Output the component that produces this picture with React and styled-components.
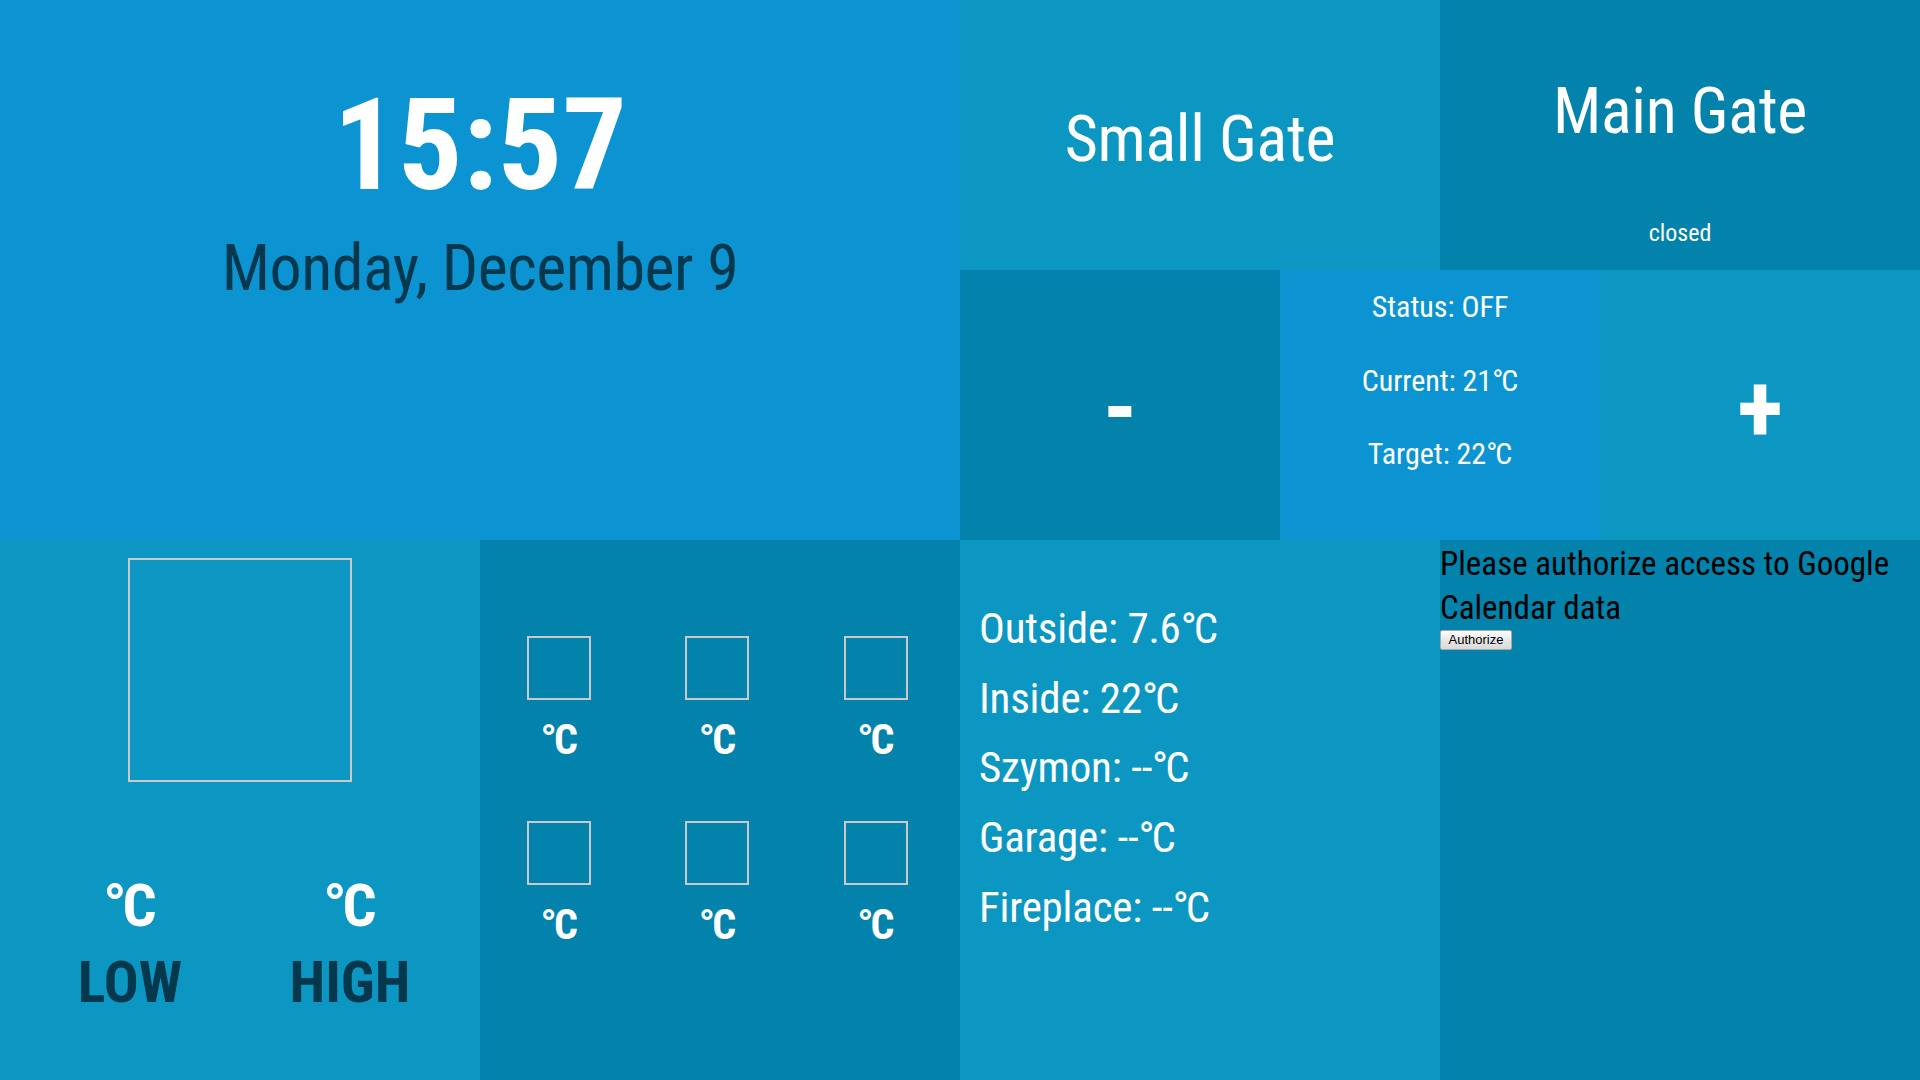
import React from "react";
import styled, { createGlobalStyle } from "styled-components";

const FONT = `"Roboto Condensed", Roboto, "Liberation Sans Narrow", sans-serif`;

const GlobalStyle = createGlobalStyle`
  html, body {
    margin: 0;
    padding: 0;
    width: 1920px;
    height: 1080px;
    overflow: hidden;
    background: #0382ab;
  }
  body {
    font-family: ${FONT};
    font-stretch: condensed;
  }
  * { box-sizing: border-box; }
`;

const C = {
  bright: "#0c94d2",
  mid: "#0c97c3",
  dark: "#0382ab",
  ink: "#05384d",
};

const Page = styled.div`
  display: grid;
  grid-template-columns: 960px 960px;
  grid-template-rows: 540px 540px;
  width: 1920px;
  height: 1080px;
`;

const Panel = styled.section`
  background: ${(p) => C[p.$tone]};
  color: #fff;
  overflow: hidden;
`;

const Deg = styled.span`
  letter-spacing: -0.07em;
`;

const withDeg = (text) => {
  const i = text.indexOf("°");
  if (i < 0) return text;
  return (
    <>
      {text.slice(0, i)}
      <Deg>°</Deg>
      {text.slice(i + 1)}
    </>
  );
};

/* ---- Clock ---- */
const ClockPanel = styled(Panel)`
  display: flex;
  flex-direction: column;
  align-items: center;
  padding-top: 70px;
`;

const Time = styled.div`
  font-size: 128px;
  font-weight: 700;
  line-height: 150px;
`;

const DateLine = styled.div`
  margin-top: 11px;
  font-size: 64px;
  line-height: 75px;
  letter-spacing: -0.5px;
  color: ${C.ink};
`;

/* ---- Right top ---- */
const RightTop = styled.div`
  display: grid;
  grid-template-rows: 270px 270px;
`;

const GateRow = styled.div`
  display: grid;
  grid-template-columns: 480px 480px;
`;

const GateTile = styled(Panel)`
  display: flex;
  flex-direction: column;
  align-items: center;
  justify-content: ${(p) => (p.$top ? "flex-start" : "center")};
  padding-top: ${(p) => (p.$top ? "74px" : "8px")};
  cursor: pointer;
`;

const GateTitle = styled.div`
  font-size: 64px;
  line-height: 75px;
  letter-spacing: -0.3px;
`;

const GateState = styled.div`
  margin-top: 70px;
  font-size: 24px;
  line-height: 28px;
`;

const ThermoRow = styled.div`
  display: grid;
  grid-template-columns: 320px 320px 320px;
`;

const ThermoButton = styled(Panel)`
  display: flex;
  align-items: center;
  justify-content: center;
  font-size: 96px;
  font-weight: 700;
  line-height: 1;
  padding-top: 6px;
  cursor: pointer;
  user-select: none;
`;

const ThermoStatus = styled(Panel)`
  display: flex;
  flex-direction: column;
  align-items: center;
  font-size: 30px;
  line-height: 73.5px;
`;

/* ---- Bottom ---- */
const BottomLeft = styled.div`
  display: grid;
  grid-template-columns: 480px 480px;
`;

const BottomRight = styled.div`
  display: grid;
  grid-template-columns: 480px 480px;
`;

const WeatherPanel = styled(Panel)`
  display: flex;
  flex-direction: column;
  align-items: center;
  padding-top: 18px;
`;

const IconFrame = styled.div`
  width: ${(p) => p.$size}px;
  height: ${(p) => p.$size}px;
  border: 2px solid #c9c9c9;
  flex: none;
`;

const HiLo = styled.div`
  margin-top: 85px;
  width: 100%;
  padding: 0 20px;
  display: grid;
  grid-template-columns: 1fr 1fr;
  text-align: center;
  font-weight: 700;
  line-height: 77px;
`;

const HiLoLabel = styled.div`
  font-size: ${(p) => (p.$ink ? "58px" : "60px")};
  color: ${(p) => (p.$ink ? C.ink : "#fff")};
`;

const ForecastPanel = styled(Panel)`
  padding: 96px 5px 0 0;
  display: grid;
  grid-template-columns: repeat(3, 1fr);
  grid-auto-rows: 185px;
`;

const ForecastCell = styled.div`
  display: flex;
  flex-direction: column;
  align-items: center;
`;

const ForecastTemp = styled.div`
  margin-top: 15px;
  font-size: 42px;
  font-weight: 700;
  line-height: 49px;
`;

const SensorPanel = styled(Panel)`
  padding: 54px 0 0 19px;
  font-size: 43px;
  line-height: 69.7px;
  letter-spacing: -0.2px;
`;

const CalendarPanel = styled(Panel)`
  color: #000;
  padding-top: 2px;
  font-size: 33px;
  line-height: 44px;
`;

const AuthButton = styled.button`
  display: block;
  width: 72px;
  height: 20px;
  padding: 0;
  font-family: "Liberation Sans", Arial, sans-serif;
  font-stretch: normal;
  font-size: 13px;
  line-height: 16px;
  color: #000;
  background: linear-gradient(#fefefe, #e4e4e4 60%, #dadada);
  border: 1px solid #a9a9a9;
  border-radius: 2px;
  cursor: pointer;
`;

const forecast = [0, 1, 2, 3, 4, 5];
const sensors = [
  "Outside: 7.6°C",
  "Inside: 22°C",
  "Szymon: --°C",
  "Garage: --°C",
  "Fireplace: --°C",
];

export default function App() {
  return (
    <>
      <GlobalStyle />
      <Page>
        <ClockPanel $tone="bright">
          <Time>15:57</Time>
          <DateLine>Monday, December 9</DateLine>
        </ClockPanel>

        <RightTop>
          <GateRow>
            <GateTile $tone="mid">
              <GateTitle>Small Gate</GateTitle>
            </GateTile>
            <GateTile $tone="dark" $top>
              <GateTitle>Main Gate</GateTitle>
              <GateState>closed</GateState>
            </GateTile>
          </GateRow>
          <ThermoRow>
            <ThermoButton $tone="dark">-</ThermoButton>
            <ThermoStatus $tone="bright">
              <div>Status: OFF</div>
              <div>{withDeg("Current: 21°C")}</div>
              <div>{withDeg("Target: 22°C")}</div>
            </ThermoStatus>
            <ThermoButton $tone="mid">+</ThermoButton>
          </ThermoRow>
        </RightTop>

        <BottomLeft>
          <WeatherPanel $tone="mid">
            <IconFrame $size={224} />
            <HiLo>
              <HiLoLabel>{withDeg("°C")}</HiLoLabel>
              <HiLoLabel>{withDeg("°C")}</HiLoLabel>
              <HiLoLabel $ink>LOW</HiLoLabel>
              <HiLoLabel $ink>HIGH</HiLoLabel>
            </HiLo>
          </WeatherPanel>
          <ForecastPanel $tone="dark">
            {forecast.map((i) => (
              <ForecastCell key={i}>
                <IconFrame $size={64} />
                <ForecastTemp>{withDeg("°C")}</ForecastTemp>
              </ForecastCell>
            ))}
          </ForecastPanel>
        </BottomLeft>

        <BottomRight>
          <SensorPanel $tone="mid">
            {sensors.map((s) => (
              <div key={s}>{withDeg(s)}</div>
            ))}
          </SensorPanel>
          <CalendarPanel $tone="dark">
            Please authorize access to Google Calendar data
            <AuthButton>Authorize</AuthButton>
          </CalendarPanel>
        </BottomRight>
      </Page>
    </>
  );
}
